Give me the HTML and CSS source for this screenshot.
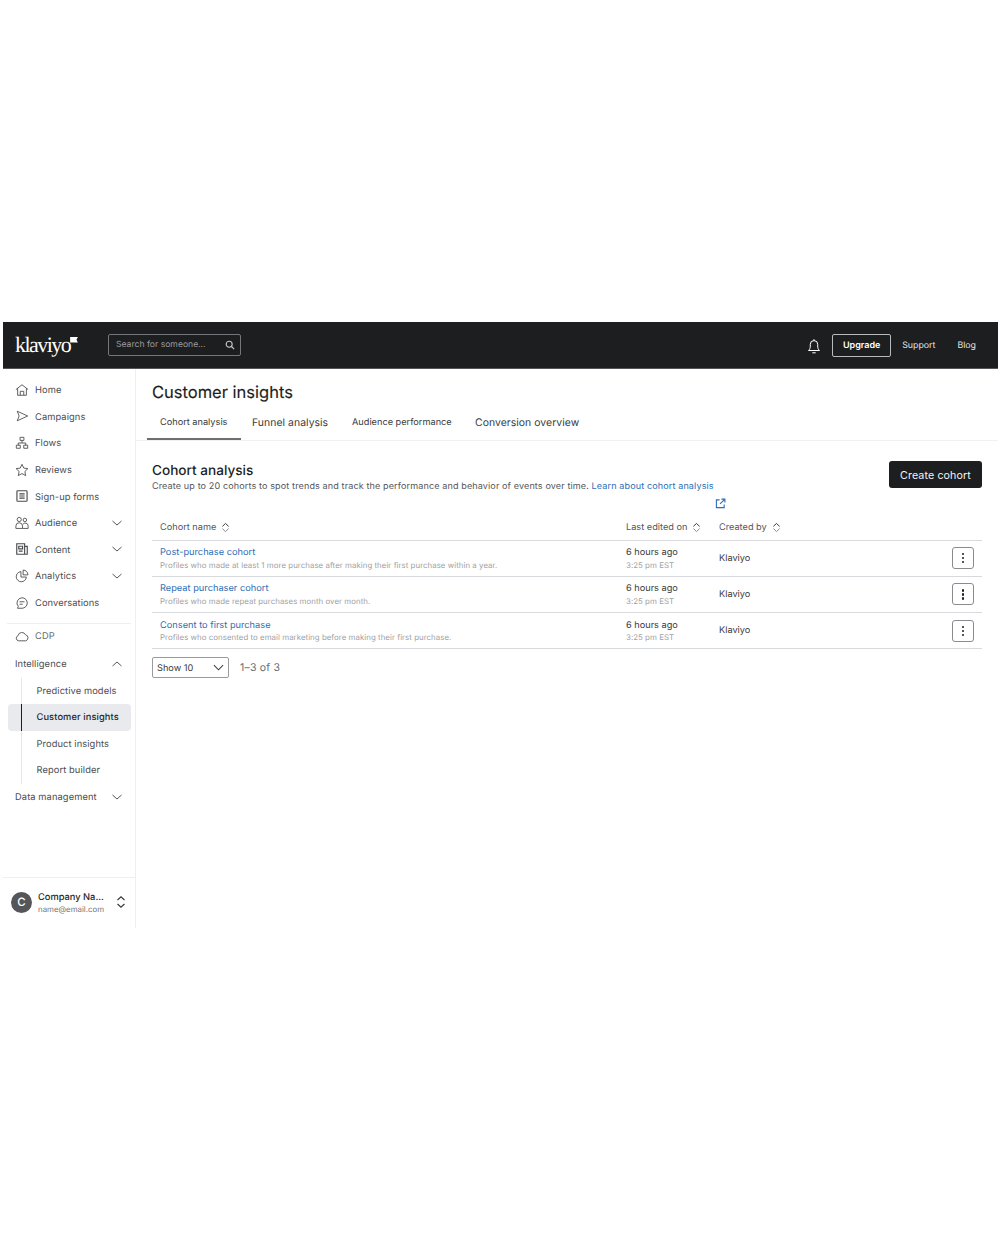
FILE: index.html
```html
<!DOCTYPE html>
<html lang="en">
<head>
<meta charset="utf-8">
<title>Customer insights</title>
<link rel="stylesheet" href="styles.css">
</head>
<body>
<div class="app">
  <header class="topbar">
    <div class="logo"><span class="logo-text">klaviyo</span><svg class="logo-flag" viewBox="0 0 9 7"><path d="M0 0H9L7.400 3.200L9 6.400H0Z" fill="#fff"/></svg></div>
    <div class="search"><span>Search for someone...</span>
      <svg viewBox="0 0 12 12" class="i10"><circle cx="5" cy="5" r="3.600" fill="none" stroke="#c9cacc" stroke-width="1.300"/><path d="M7.800 7.800L11 11" stroke="#c9cacc" stroke-width="1.300"/></svg></div>
    <div class="top-right">
      <svg viewBox="0 0 16 16" class="bell"><path d="M2.500 12.500c1.200-1 1.800-2.300 1.800-4.500V6.300a3.700 3.700 0 0 1 7.400 0V8c0 2.200.6 3.500 1.800 4.500ZM6.300 14.800h3.400M8 1.200v1.400" fill="none" stroke="#fff" stroke-width="1"/></svg>
      <span class="upgrade">Upgrade</span>
      <span class="toplink support">Support</span>
      <span class="toplink">Blog</span>
    </div>
  </header>
  <div class="body">
    <aside class="side">
      <nav class="nav">
        <a class="item"><svg viewBox="0 0 16 16" class="ic"><path d="M1 7.500L8 2l7 5.500M3 6v8h10V6M6 14v-4.500h4V14"/></svg>Home</a>
        <a class="item"><svg viewBox="0 0 16 16" class="ic"><path d="M2.500 2.500L14.500 8 2.500 13.500 4.800 8Z"/></svg>Campaigns</a>
        <a class="item"><svg viewBox="0 0 16 16" class="ic"><path d="M5.800 1.500h4.400v3.500H5.800ZM1.500 10.500h4.500V14H1.500ZM10 10.500h4.500V14H10ZM8 5v3M3.700 10.500V8h8.600v2.500"/></svg>Flows</a>
        <a class="item"><svg viewBox="0 0 16 16" class="ic"><path d="M8 1.500l2 4.300 4.700.6-3.400 3.300.9 4.700L8 12.100l-4.200 2.300.9-4.700L1.300 6.400 6 5.800Z"/></svg>Reviews</a>
        <a class="item"><svg viewBox="0 0 16 16" class="ic ic-bold"><path d="M3.200 2h9.600a1 1 0 0 1 1 1v10a1 1 0 0 1-1 1H3.200a1 1 0 0 1-1-1V3a1 1 0 0 1 1-1ZM5 5.500h6M5 8h6M5 10.500h6"/></svg>Sign-up forms</a>
        <a class="item"><svg viewBox="0 0 16 16" class="ic"><circle cx="4.800" cy="4" r="2.400"/><circle cx="11.300" cy="4.500" r="2"/><path d="M1 14.200v-2.700a3.800 3.800 0 0 1 7.600 0v2.700ZM8.600 14.200H15v-3a3.200 3.200 0 0 0-6-1.500"/></svg>Audience<svg viewBox="0 0 12 12" class="chev"><path d="M1.500 4l4.500 4 4.500-4"/></svg></a>
        <a class="item"><svg viewBox="0 0 16 16" class="ic ic-bold"><path d="M2 2h9v12H2ZM11 5h3v9h-3M4.300 4.800h4.400v3H4.300ZM4.300 10.500h4.400"/></svg>Content<svg viewBox="0 0 12 12" class="chev"><path d="M1.500 4l4.500 4 4.500-4"/></svg></a>
        <a class="item"><svg viewBox="0 0 16 16" class="ic"><path d="M6.800 3a5.800 5.800 0 1 0 6.200 6.200H6.800ZM9.300 1.200a5.500 5.500 0 0 1 5.500 5.500H9.300Z"/></svg>Analytics<svg viewBox="0 0 12 12" class="chev"><path d="M1.500 4l4.500 4 4.500-4"/></svg></a>
        <a class="item"><svg viewBox="0 0 16 16" class="ic"><path d="M8 2a6 6 0 1 1 0 12H2.800l1-2A6 6 0 0 1 8 2ZM5.200 6.600h5.600M5.200 9.400h3.600"/></svg>Conversations</a>
        <div class="rule"></div>
        <a class="item item-cdp"><svg viewBox="0 0 16 16" class="ic"><path d="M4.200 13.500a3 3 0 0 1-.8-5.800 4.600 4.600 0 0 1 8.700-1 3.500 3.500 0 0 1 .2 6.800Z"/></svg>CDP</a>
        <a class="item item-intel">Intelligence<svg viewBox="0 0 12 12" class="chev"><path d="M1.500 8l4.500-4 4.500 4"/></svg></a>
        <div class="sub">
          <a class="subitem">Predictive models</a>
          <a class="subitem active">Customer insights</a>
          <a class="subitem">Product insights</a>
          <a class="subitem">Report builder</a>
        </div>
        <a class="item">Data management<svg viewBox="0 0 12 12" class="chev"><path d="M1.500 4l4.500 4 4.500-4"/></svg></a>
      </nav>
      <div class="account">
        <span class="avatar">C</span>
        <span class="acct-text"><b>Company Na...</b><small>name@email.com</small></span>
        <svg viewBox="0 0 10 14" class="updown"><path d="M1.500 5L5 1.800 8.500 5M1.500 9L5 12.200 8.500 9"/></svg>
      </div>
    </aside>
    <main class="main">
      <div class="head">
        <h1>Customer insights</h1>
        <div class="tabs">
          <a class="tab tab-a active">Cohort analysis</a>
          <a class="tab tab-b big">Funnel analysis</a>
          <a class="tab tab-c">Audience performance</a>
          <a class="tab tab-d big">Conversion overview</a>
        </div>
      </div>
      <section class="content">
        <div class="intro">
          <div class="intro-text">
            <h2>Cohort analysis</h2>
            <p>Create up to 20 cohorts to spot trends and track the performance and behavior of events over time. <a class="link">Learn about cohort analysis</a><svg viewBox="0 0 12 12" class="ext"><path d="M5 2H1.500v8.500H10V7M7 1.200h3.800V5M10.800 1.200L5.500 6.500"/></svg></p>
          </div>
          <button class="primary">Create cohort</button>
        </div>
        <div class="row th">
          <div class="c-name"><span>Cohort name</span><svg viewBox="0 0 10 12" class="sort"><path d="M1.500 4.800L5 1.500l3.500 3.300"/><path class="sort-low" d="M1.500 7.200L5 10.500l3.500-3.300"/></svg></div>
          <div class="c-date"><span>Last edited on</span><svg viewBox="0 0 10 12" class="sort"><path d="M1.500 4.800L5 1.500l3.500 3.300"/><path class="sort-low" d="M1.500 7.200L5 10.500l3.500-3.300"/></svg></div>
          <div class="c-by"><span>Created by</span><svg viewBox="0 0 10 12" class="sort"><path d="M1.500 4.800L5 1.500l3.500 3.300"/><path class="sort-low" d="M1.500 7.200L5 10.500l3.500-3.300"/></svg></div>
        </div>
        <div class="row tr">
          <div class="c-name cell"><a class="link name">Post-purchase cohort</a><small>Profiles who made at least 1 more purchase after making their first purchase within a year.</small></div>
          <div class="c-date cell"><span>6 hours ago</span><small>3:25 pm EST</small></div>
          <div class="c-by">Klaviyo</div>
          <button class="more"><i></i><i></i><i></i></button>
        </div>
        <div class="row tr">
          <div class="c-name cell"><a class="link name">Repeat purchaser cohort</a><small>Profiles who made repeat purchases month over month.</small></div>
          <div class="c-date cell"><span>6 hours ago</span><small>3:25 pm EST</small></div>
          <div class="c-by">Klaviyo</div>
          <button class="more"><i></i><i></i><i></i></button>
        </div>
        <div class="row tr">
          <div class="c-name cell"><a class="link name">Consent to first purchase</a><small>Profiles who consented to email marketing before making their first purchase.</small></div>
          <div class="c-date cell"><span>6 hours ago</span><small>3:25 pm EST</small></div>
          <div class="c-by">Klaviyo</div>
          <button class="more"><i></i><i></i><i></i></button>
        </div>
        <div class="pager">
          <div class="select"><span>Show 10</span><svg viewBox="0 0 12 12" class="sel-chev"><path d="M1 3.500l5 5 5-5"/></svg></div>
          <span class="count">1–3 of 3</span>
        </div>
      </section>
    </main>
  </div>
</div>
</body>
</html>
```
FILE: styles.css
```css
* { box-sizing: border-box; }
html, body { margin: 0; background: #fff; }
body { font-family: Inter, "Liberation Sans", sans-serif; color: #3a3b3d; height: 1250px; overflow: hidden; text-rendering: geometricPrecision; }
.app { margin: 322px 2px 0 3px; width: 995px; }

.topbar { height: 47px; background: #1d1e20; display: flex; align-items: center; padding: 1px 0 0 12px; border-bottom: 1px solid #55565a; }
.logo { width: 93px; display: flex; align-items: flex-start; color: #fff; }
.logo-text { font-family: "Liberation Serif", serif; font-size: 22px; line-height: 22px; letter-spacing: -1.550px; margin-top: -1px; }
.logo-flag { width: 8px; height: 6px; margin-top: 2px; }
.search { width: 133px; height: 22px; margin-bottom: 1px; border: 1px solid #75767a; border-radius: 2px; display: flex; align-items: center; justify-content: space-between; padding: 0 5px 0 7px; font-size: 8.600px; color: #9a9b9e; }
.i10 { width: 10px; height: 10px; }
.top-right { margin-left: auto; display: flex; align-items: center; color: #e4e4e5; font-size: 8.800px; padding-right: 22px; }
.bell { width: 16px; height: 16px; margin-right: 10px; }
.upgrade { width: 59px; height: 23px; border: 1px solid #b9babc; border-radius: 2px; display: flex; align-items: center; justify-content: center; color: #fff; font-weight: 600; font-size: 9px; }
.support { margin: 0 22px 0 11px; }

.body { display: flex; height: 559px; }
.side { width: 133px; border-right: 1px solid #efeff0; display: flex; flex-direction: column; padding-top: 8.500px; }
.nav { flex: 1; }
.item { display: flex; align-items: center; height: 26.600px; padding: 0 12px; font-size: 9.300px; color: #4a4b4e; letter-spacing: 0.1px; }
.item-cdp { color: #6a6b6e; height: 26px; }
.item-intel { margin-top: 1.400px; }
.ic { width: 14px; height: 14px; margin: 0 6px 2px 0; fill: none; stroke: #4a4b4e; stroke-width: 1; flex: none; }
.ic-bold { stroke-width: 1.300; }
.chev { width: 12px; height: 12px; margin: 0 0 2px auto; fill: none; stroke: #55565a; stroke-width: 1; }
.rule { height: 1px; background: #efeff0; margin: 6px 4px 0; }
.sub { margin: 0 4px 0 5px; }
.subitem { display: flex; align-items: center; height: 26.600px; padding-left: 28.500px; font-size: 9.300px; color: #4a4b4e; position: relative; letter-spacing: 0.1px; }
.subitem::before { content: ""; position: absolute; left: 13px; top: 0; bottom: 0; width: 1px; background: #e6e7e9; }
.subitem.active { background: #e8eaed; border-radius: 4px; color: #26272a; font-weight: 500; }
.subitem.active::before { background: #1d1e20; }

.account { height: 51px; border-top: 1px solid #efeff0; display: flex; align-items: center; padding: 0 8px; }
.avatar { width: 21px; height: 21px; border-radius: 50%; background: #55565a; color: #fff; font-size: 11.500px; font-weight: 500; display: flex; align-items: center; justify-content: center; margin: 0 6px 1.500px 0; flex: none; }
.acct-text { display: flex; flex-direction: column; width: 77px; }
.acct-text b { font-weight: 500; font-size: 9.300px; color: #26272a; line-height: 12px; white-space: nowrap; }
.acct-text small { font-size: 7.850px; color: #75767a; line-height: 11px; white-space: nowrap; }
.updown { width: 10px; height: 14px; fill: none; stroke: #3a3b3d; stroke-width: 1.200; flex: none; margin: 0 0 1.500px 1px; }

.main { flex: 1; min-width: 0; }
.head { border-bottom: 1px solid #f1f1f2; height: 71.500px; padding-top: 13px; }
h1 { margin: 0 0 0 16px; font-size: 16.500px; font-weight: 400; line-height: 20px; color: #1d1e20; -webkit-text-stroke: 0.15px #1d1e20; }
.tabs { display: flex; margin: 9px 0 0 11px; height: 29px; }
.tab { display: flex; align-items: center; font-size: 9.200px; color: #3a3b3d; height: 29px; padding: 0 13px 7px; white-space: nowrap; }
.tab.big { font-size: 10.400px; letter-spacing: 0.05px; padding-bottom: 6px; }
.tab-a { width: 94px; }
.tab-b { width: 100px; padding-left: 11px; }
.tab-c { width: 123px; padding-left: 11px; }
.tab-d { padding-left: 11px; }
.tab.active { border-bottom: 2px solid #6e6f72; padding-bottom: 5px; }

.content { padding: 21px 16px 0; }
.intro { display: flex; justify-content: space-between; align-items: flex-start; height: 54px; }
.intro-text { width: 575px; }
h2 { margin: 1px 0 0; font-size: 13.600px; font-weight: 500; line-height: 17px; color: #1d1e20; }
p { margin: -2px 0 0; font-size: 9.050px; line-height: 18px; color: #55565a; letter-spacing: 0.12px; }
.link { color: #2c6db5; }
.ext { display: inline-block; width: 11px; height: 11px; fill: none; stroke: #2c6db5; stroke-width: 1.200; vertical-align: -2px; margin-left: 563px; }
.primary { width: 93px; height: 27px; margin-top: -0.500px; border: 0; border-radius: 3px; background: #1d1e20; color: #f4f4f5; font-family: inherit; font-size: 10.700px; letter-spacing: 0.1px; padding: 1px 0 0; }
.row { display: flex; align-items: center; border-bottom: 1px solid #d8d9dc; }
.th { height: 25px; font-size: 9.200px; color: #55565a; }
.tr { height: 36.300px; font-size: 9.200px; color: #3a3b3d; }
.c-name { width: 474px; padding-left: 8px; display: flex; align-items: center; }
.c-date { width: 93px; display: flex; align-items: center; }
.c-by { flex: 1; display: flex; align-items: center; }
.sort { width: 9px; height: 11px; fill: none; stroke: #3a3b3d; stroke-width: 1.100; margin-left: 5px; }
.sort-low { stroke: #8a8b8e; }
.cell { flex-direction: column; align-items: flex-start; gap: 1.500px; line-height: 10px; padding-top: 1.500px; }
.cell small { font-size: 7.850px; color: #a0a1a4; letter-spacing: 0.05px; line-height: 10px; }
.name { font-size: 9.250px; line-height: 10px; }
.more { width: 22px; height: 22px; margin-right: 8px; border: 1px solid #8a8b8e; border-radius: 3px; background: #fff; padding: 0; display: flex; flex-direction: column; align-items: center; justify-content: center; gap: 1.600px; }
.more i { width: 2.400px; height: 2.400px; border-radius: 50%; background: #1d1e20; display: block; }
.pager { display: flex; align-items: center; margin-top: 8px; }
.select { width: 77px; height: 21px; border: 1px solid #9a9b9e; border-radius: 2px; display: flex; align-items: center; justify-content: space-between; padding: 1px 4px 0; font-size: 9.200px; color: #3a3b3d; }
.sel-chev { width: 11px; height: 11px; margin-bottom: 1px; fill: none; stroke: #3a3b3d; stroke-width: 1.100; }
.count { margin-left: 11px; font-size: 10.500px; color: #6a6b6e; letter-spacing: 0.2px; }
```
